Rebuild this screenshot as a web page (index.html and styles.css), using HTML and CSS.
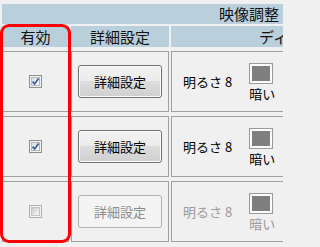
FILE: index.html
```html
<!DOCTYPE html>
<html lang="ja">
<head>
<meta charset="utf-8">
<link rel="stylesheet" href="styles.css">
</head>
<body>
<div class="page">
  <div class="group-head">映像調整</div>
  <div class="grid">
    <div class="th">有効</div>
    <div class="th">詳細設定</div>
    <div class="th th-wide"><span>ディスプレイ</span></div>

    <div class="td td-check">
      <span class="cb"><span class="cb-in"><svg width="9" height="9" viewBox="0 0 9 9"><path d="M1.6 4.6 L3.6 7 L7.6 1.6" fill="none" stroke="#3b5aa6" stroke-width="1.7"/></svg></span></span>
    </div>
    <div class="td td-btn"><span class="btn">詳細設定</span></div>
    <div class="td td-disp">
      <span class="bright">明るさ 8</span>
      <span class="sw-group"><span class="swatch"><span class="swatch-fill"></span></span><span class="sw-label">暗い</span></span>
    </div>

    <div class="td td-check">
      <span class="cb"><span class="cb-in"><svg width="9" height="9" viewBox="0 0 9 9"><path d="M1.6 4.6 L3.6 7 L7.6 1.6" fill="none" stroke="#3b5aa6" stroke-width="1.7"/></svg></span></span>
    </div>
    <div class="td td-btn"><span class="btn">詳細設定</span></div>
    <div class="td td-disp">
      <span class="bright">明るさ 8</span>
      <span class="sw-group"><span class="swatch"><span class="swatch-fill"></span></span><span class="sw-label">暗い</span></span>
    </div>

    <div class="td td-check">
      <span class="cb cb-off"><span class="cb-in"></span></span>
    </div>
    <div class="td td-btn"><span class="btn btn-off">詳細設定</span></div>
    <div class="td td-disp off">
      <span class="bright">明るさ 8</span>
      <span class="sw-group"><span class="swatch"><span class="swatch-fill"></span></span><span class="sw-label">暗い</span></span>
    </div>
  </div>
  <div class="highlight"></div>
</div>
</body>
</html>
```
FILE: styles.css
```css
html, body {
  margin: 0;
  padding: 0;
  overflow: hidden;
  background: #f0f0f0;
}
body {
  width: 283px;
  height: 247px;
  font-family: "Noto Sans CJK JP", "Noto Sans", sans-serif;
  color: #000;
}
.page {
  position: relative;
  box-sizing: border-box;
  width: 283px;
  height: 247px;
  overflow: hidden;
  padding: 4px 0 0 2px;
}
.group-head {
  height: 20px;
  background: #b9d0dc;
  font-size: 15px;
  line-height: 20px;
  text-align: right;
  padding-right: 4px;
  color: #111;
}
.grid {
  margin-top: 2px;
  display: grid;
  grid-template-columns: 67px 98px 1fr;
  grid-template-rows: 21px 61px 61px 61px;
  column-gap: 2px;
  row-gap: 4px;
  margin-right: -12px;
}
.th {
  background: #b9d0dc;
  font-size: 15px;
  line-height: 21px;
  text-align: center;
  color: #111;
  overflow: hidden;
  white-space: nowrap;
}
.th-wide {
  text-align: left;
  padding-left: 88px;
}
.td {
  box-sizing: border-box;
  border: 1px solid #a0a0a0;
  display: flex;
  align-items: center;
  font-size: 13px;
}
.td-check, .td-btn {
  justify-content: center;
}
.cb {
  box-sizing: border-box;
  width: 13px;
  height: 13px;
  border: 1px solid #8e8f8f;
  background: #f4f4f4;
  padding: 1px;
  display: flex;
}
.cb-in {
  box-sizing: border-box;
  width: 9px;
  height: 9px;
  background: linear-gradient(135deg, #d8dce2 0%, #eef0f3 60%, #fafafa 100%);
  border: 1px solid #b3b8bf;
  position: relative;
  display: block;
}
.cb-in svg {
  position: absolute;
  left: -1px;
  top: -1px;
}
.cb-off {
  border-color: #b0b0b0;
}
.cb-off .cb-in {
  border-color: #c2c2c2;
  background: linear-gradient(135deg, #c9c9c9 0%, #e8e8e8 60%, #f7f7f7 100%);
}
.btn {
  box-sizing: border-box;
  width: 84px;
  height: 33px;
  border: 1px solid #707070;
  border-radius: 3px;
  background: linear-gradient(#f2f2f2 0%, #ebebeb 50%, #dddddd 50%, #cfcfcf 100%);
  display: flex;
  align-items: center;
  justify-content: center;
  font-size: 13px;
  line-height: 15px;
  color: #000;
  box-shadow: inset 0 0 0 1px #fcfcfc;
}
.btn-off {
  border-color: #adb2b5;
  background: #f4f4f4;
  box-shadow: none;
  color: #8d8d8d;
}
.td-disp {
  padding-left: 11px;
  gap: 14px;
}
.bright {
  line-height: 15px;
  white-space: nowrap;
}
.sw-group {
  display: flex;
  flex-direction: column;
  align-items: center;
}
.swatch {
  box-sizing: border-box;
  width: 24px;
  height: 21px;
  border: 1px solid #9a9a9a;
  padding: 2px;
  background: #fcfcfc;
  display: flex;
}
.swatch-fill {
  flex: 1;
  background: #7f7f7f;
}
.sw-label {
  margin-top: 3px;
  line-height: 14px;
  font-size: 13px;
  padding-left: 3px;
}
.off .bright, .off .sw-label {
  color: #9a9a9a;
}
.highlight {
  position: absolute;
  left: 0;
  top: 24px;
  width: 71px;
  height: 219px;
  box-sizing: border-box;
  border: 3px solid #ff0000;
  border-radius: 9px;
}
```
